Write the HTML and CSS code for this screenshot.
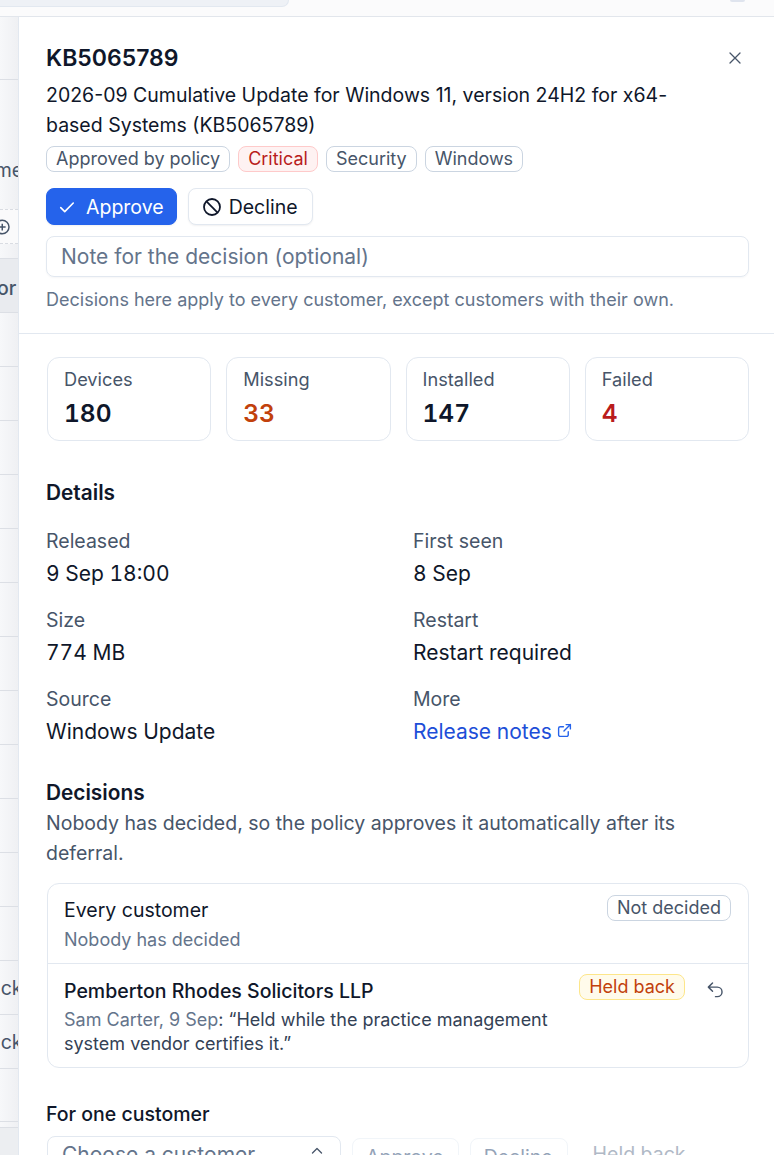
FILE: index.html
```html
<!DOCTYPE html>
<html lang="en">
<head>
    <meta charset="UTF-8">
    <meta name="viewport" content="width=device-width, initial-scale=1.0">
    <title>KB5065789</title>
    <link rel="stylesheet" href="styles.css">
</head>
<body>
    <div class="topbar">
        <div class="search"></div>
        <div class="avatar"></div>
    </div>

    <div class="main">
        <div class="behind">
            <div class="row row-tall"></div>
            <div class="row row-name"><span class="clip clip-name">Name</span></div>
            <div class="row-add">
                <svg viewBox="0 0 16 16" width="18" height="18" fill="none" stroke="#475569" stroke-width="1.3"><circle cx="2" cy="8" r="6"/><path d="M2 5v6M0 8h5"/></svg>
            </div>
            <div class="row row-head"><span class="clip clip-or">Vendor</span></div>
            <div class="row"></div>
            <div class="row"></div>
            <div class="row"></div>
            <div class="row"></div>
            <div class="row"></div>
            <div class="row"></div>
            <div class="row"></div>
            <div class="row"></div>
            <div class="row"></div>
            <div class="row"></div>
            <div class="row"></div>
            <div class="row"></div>
            <div class="row"><span class="clip clip-ck">Back</span></div>
            <div class="row"><span class="clip clip-ck">Back</span></div>
            <div class="row row-last"></div>
            <div class="row-tail"></div>
        </div>

        <div class="panel">
            <div class="panel-head">
                <div class="title-row">
                    <h1>KB5065789</h1>
                    <button class="close" aria-label="Close">
                        <svg viewBox="0 0 12 12" width="12" height="12" fill="none" stroke="#475569" stroke-width="1.3" stroke-linecap="round"><path d="M1 1l10 10M11 1L1 11"/></svg>
                    </button>
                </div>
                <p class="desc">2026-09 Cumulative Update for Windows 11, version 24H2 for x64-based Systems (KB5065789)</p>
                <div class="tags">
                    <span class="tag">Approved by policy</span>
                    <span class="tag tag-red">Critical</span>
                    <span class="tag">Security</span>
                    <span class="tag">Windows</span>
                </div>
                <div class="actions">
                    <button class="btn btn-primary">
                        <svg viewBox="0 0 16 16" width="20" height="20" fill="none" stroke="#fff" stroke-width="1.3" stroke-linecap="round" stroke-linejoin="round"><path d="M3 8.500l3.200 3.200L13 4.800"/></svg>
                        Approve
                    </button>
                    <button class="btn">
                        <svg viewBox="0 0 18 18" width="20" height="20" fill="none" stroke="#0f172a" stroke-width="1.6"><circle cx="9" cy="9" r="7.200"/><path d="M4 4l10 10"/></svg>
                        Decline
                    </button>
                </div>
                <div class="note-input">Note for the decision (optional)</div>
                <p class="hint">Decisions here apply to every customer, except customers with their own.</p>
            </div>

            <div class="panel-body">
                <div class="stats">
                    <div class="stat"><span class="stat-label">Devices</span><span class="stat-value">180</span></div>
                    <div class="stat"><span class="stat-label">Missing</span><span class="stat-value orange">33</span></div>
                    <div class="stat"><span class="stat-label">Installed</span><span class="stat-value">147</span></div>
                    <div class="stat"><span class="stat-label">Failed</span><span class="stat-value red">4</span></div>
                </div>

                <h2>Details</h2>
                <div class="details">
                    <div class="field"><span class="field-label">Released</span><span class="field-value">9 Sep 18:00</span></div>
                    <div class="field"><span class="field-label">First seen</span><span class="field-value">8 Sep</span></div>
                    <div class="field"><span class="field-label">Size</span><span class="field-value">774 MB</span></div>
                    <div class="field"><span class="field-label">Restart</span><span class="field-value">Restart required</span></div>
                    <div class="field"><span class="field-label">Source</span><span class="field-value">Windows Update</span></div>
                    <div class="field">
                        <span class="field-label">More</span>
                        <span class="field-value">
                            <a class="link" href="#">Release notes
                                <svg viewBox="0 0 14 14" width="15" height="15" fill="none" stroke="#2563eb" stroke-width="1.3" stroke-linecap="round" stroke-linejoin="round"><path d="M10.500 8v3a1.500 1.500 0 0 1-1.500 1.500H3A1.500 1.500 0 0 1 1.500 11V5A1.500 1.500 0 0 1 3 3.500h3M8.500 1.500h4v4M12.500 1.500L6.500 7.500"/></svg>
                            </a>
                        </span>
                    </div>
                </div>

                <h2 class="decisions-head">Decisions</h2>
                <p class="decisions-text">Nobody has decided, so the policy approves it automatically after its deferral.</p>
                <div class="decision-box">
                    <div class="decision">
                        <div class="decision-main">
                            <div class="decision-name">Every customer</div>
                            <div class="decision-meta">Nobody has decided</div>
                        </div>
                        <span class="tag">Not decided</span>
                    </div>
                    <div class="decision decision-held">
                        <div class="decision-main">
                            <div class="decision-name name-strong">Pemberton Rhodes Solicitors LLP</div>
                            <div class="decision-meta meta-small"><span class="muted">Sam Carter, 9 Sep</span>: “Held while the practice management system vendor certifies it.”</div>
                        </div>
                        <span class="tag tag-amber">Held back</span>
                        <button class="undo" aria-label="Undo">
                            <svg viewBox="0 0 16 16" width="19" height="19" fill="none" stroke="#475569" stroke-width="1.2" stroke-linecap="round" stroke-linejoin="round"><path d="M5.500 2.500L2 6l3.500 3.500M2 6h7.500a4 4 0 0 1 0 8H8"/></svg>
                        </button>
                    </div>
                </div>

                <h3>For one customer</h3>
                <div class="one-customer">
                    <div class="select">
                        <span>Choose a customer</span>
                        <svg viewBox="0 0 12 16" width="12" height="16" fill="none" stroke="#475569" stroke-width="1.300" stroke-linecap="round" stroke-linejoin="round"><path d="M1.500 6L6 1.500 10.500 6M1.500 10L6 14.500 10.500 10"/></svg>
                    </div>
                    <button class="btn btn-off">Approve</button>
                    <button class="btn btn-off">Decline</button>
                    <button class="btn-ghost">Held back</button>
                </div>
            </div>
        </div>
    </div>
</body>
</html>
```

FILE: styles.css
```css
* {
    box-sizing: border-box;
}

html, body {
    height: 100%;
}

body {
    margin: 0;
    height: 1155px;
    overflow: hidden;
    background: #fff;
    color: #0f172a;
    font-family: Inter, "Liberation Sans", sans-serif;
    font-size: 19.5px;
    line-height: 30px;
}

p, h1, h2, h3 {
    margin: 0;
}

button {
    font: inherit;
    color: inherit;
    background: none;
    border: 0;
    padding: 0;
}

/* page behind the panel */
.topbar {
    height: 17px;
    display: flex;
    justify-content: space-between;
    background: #fbfbfc;
    border-bottom: 1px solid #e2e6ec;
}

.search {
    width: 289px;
    height: 7px;
    background: #eef1f6;
    border: 1px solid #e2e8f0;
    border-top: 0;
    border-left: 0;
    border-radius: 0 0 10px 0;
}

.avatar {
    width: 15px;
    height: 2px;
    margin-right: 29px;
    background: #dfe4ee;
    border-radius: 0 0 8px 8px;
}

.main {
    display: flex;
    height: 1138px;
}

.behind {
    width: 18px;
    flex: none;
    overflow: hidden;
    background: linear-gradient(to right, #f7f8fa, #eff0f3);
    color: #475569;
}

.row {
    height: 54px;
    display: flex;
    align-items: center;
    border-bottom: 1px solid #dcdfe5;
    white-space: nowrap;
}

.row-tall {
    height: 63px;
}

.row-name {
    height: 129px;
    border-bottom: 0;
    align-items: flex-end;
    padding-bottom: 24px;
}

.row-add {
    height: 35px;
    display: flex;
    align-items: center;
    background: #fafafb;
    border-top: 1px dashed #d9dce2;
    border-bottom: 1px dashed #d9dce2;
}

.row-head {
    height: 55px;
    margin-top: 14px;
    padding-top: 4px;
    background: #e9ebef;
    border-top: 1px solid #dcdfe5;
    font-weight: 500;
}

.row-last {
    height: 53px;
}

.row-tail {
    height: 40px;
    margin-top: 5px;
    background: #eceef1;
    border-top: 1px solid #dcdfe5;
}

.clip {
    flex: none;
}

.clip-name {
    margin-left: -31px;
}

.clip-or {
    margin-left: -51px;
}

.clip-ck {
    margin-left: -23px;
}

/* panel */
.panel {
    flex: 1;
    min-width: 0;
    background: #fff;
    border-left: 1px solid #e2e8f0;
}

.panel-head {
    padding: 24px 25px 18px 27px;
    border-bottom: 1px solid #e2e8f0;
}

.title-row {
    display: flex;
    justify-content: space-between;
    align-items: center;
}

h1 {
    font-size: 23px;
    line-height: 34px;
    font-weight: 600;
}

.close {
    display: flex;
    margin-right: 8px;
}

.desc {
    margin-top: 5px;
    max-width: 640px;
}

.tags {
    display: flex;
    gap: 8px;
    margin-top: 6px;
}

.tag {
    flex: none;
    height: 26px;
    padding: 0 9px;
    font-size: 18px;
    line-height: 24px;
    color: #475569;
    border: 1px solid #cbd5e1;
    border-radius: 8px;
    white-space: nowrap;
}

.tag-red {
    color: #b91c1c;
    background: #fef2f2;
    border-color: #fecaca;
}

.tag-amber {
    margin-top: -2px;
    color: #c2410c;
    background: #fffbeb;
    border-color: #fde68a;
}

.actions {
    display: flex;
    gap: 11px;
    margin-top: 16px;
}

.btn {
    display: flex;
    align-items: center;
    gap: 7px;
    height: 37px;
    padding: 0 14px 0 13px;
    border: 1px solid #e2e8f0;
    border-radius: 8px;
    background: #fff;
    box-shadow: 0 1px 2px rgba(15, 23, 42, 0.06);
}

.btn-primary {
    gap: 9px;
    padding: 0 12px 0 10px;
    color: #fff;
    background: #2563eb;
    border-color: #2563eb;
}

.note-input {
    height: 41px;
    margin-top: 11px;
    padding: 0 14px;
    line-height: 39px;
    font-size: 21px;
    color: #64748b;
    border: 1px solid #e2e8f0;
    border-radius: 8px;
    box-shadow: 0 1px 2px rgba(15, 23, 42, 0.04);
}

.hint {
    margin-top: 8px;
    font-size: 18px;
    line-height: 30px;
    color: #64748b;
}

.panel-body {
    padding: 23px 25px 0 27px;
}

.stats {
    display: grid;
    grid-template-columns: repeat(4, 1fr);
    gap: 15px;
    margin-left: 1px;
}

.stat {
    display: flex;
    flex-direction: column;
    height: 84px;
    padding: 6px 16px;
    border: 1px solid #e2e8f0;
    border-radius: 12px;
}

.stat-label {
    font-size: 18.2px;
    color: #475569;
}

.stat-value {
    font-size: 24.5px;
    font-weight: 600;
    line-height: 38px;
    font-variant-numeric: tabular-nums;
}

.orange {
    color: #c2410c;
}

.red {
    color: #b91c1c;
}

h2, h3 {
    font-size: 20.8px;
    font-weight: 600;
}

h2 {
    margin-top: 37px;
}

h3 {
    margin-top: 31px;
    font-size: 19.5px;
    font-weight: 500;
}

.details {
    display: grid;
    grid-template-columns: 367px 1fr;
    row-gap: 16px;
    margin-top: 18px;
}

.field {
    display: flex;
    flex-direction: column;
}

.field-label {
    margin-bottom: 3px;
    color: #475569;
}

.field-value {
    font-size: 21px;
    line-height: 30px;
    font-variant-numeric: tabular-nums;
}

.link {
    color: #1d4ed8;
    text-decoration: none;
}

.link svg {
    vertical-align: 1px;
}

.decisions-head {
    margin-top: 31px;
}

.decisions-text {
    color: #475569;
}

.decision-box {
    margin-top: 15px;
    margin-left: 1px;
    border: 1px solid #e2e8f0;
    border-radius: 12px;
}

.decision {
    display: flex;
    align-items: flex-start;
    gap: 14px;
    padding: 11px 17px 8px 16px;
}

.decision-held {
    padding: 12px 23px 11px 16px;
    border-top: 1px solid #e2e8f0;
}

.decision-main {
    flex: 1;
    min-width: 0;
}

.name-strong {
    font-weight: 500;
}

.decision-meta {
    font-size: 18px;
    color: #64748b;
}

.meta-small {
    margin-top: 2px;
    line-height: 24px;
    color: #334155;
}

.muted {
    color: #64748b;
}

.undo {
    display: flex;
    margin: 4px 0 0 7px;
}

.one-customer {
    display: flex;
    align-items: flex-start;
    gap: 11px;
    margin-top: 7px;
    margin-left: 1px;
}

.select {
    display: flex;
    justify-content: space-between;
    align-items: center;
    width: 294px;
    height: 37px;
    padding: 0 17px 0 14px;
    font-size: 21px;
    color: #64748b;
    border: 1px solid #e2e8f0;
    border-radius: 8px;
}

.btn-off {
    color: #94a3b8;
    margin-top: 2px;
    box-shadow: none;
    border-color: #f1f5f9;
}

.btn-ghost {
    margin: 3px 0 0 14px;
    color: #b0b9c6;
}
```
